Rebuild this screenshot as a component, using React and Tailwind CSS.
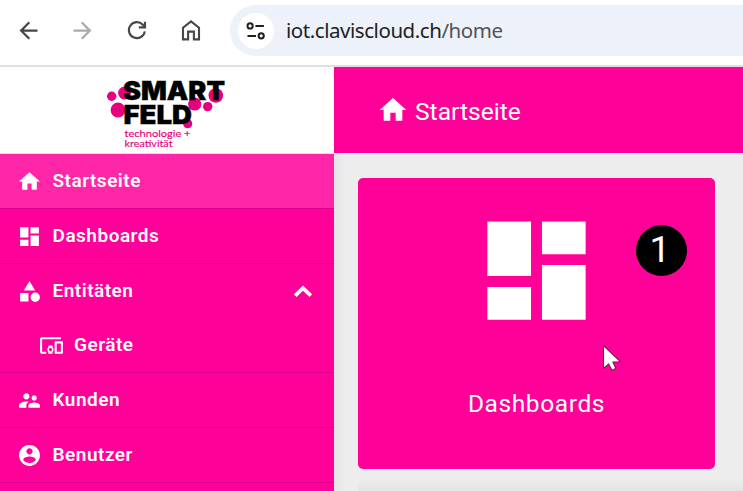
const ICONS = {
  home: 'M10 20v-6h4v6h5v-8h3L12 3 2 12h3v8z',
  dashboard: 'M3 13h8V3H3v10zm0 8h8v-6H3v6zm10 0h8V11h-8v10zm0-18v6h8V3h-8z',
  category: 'M12 2l-5.5 9h11zM17.5 13a4.5 4.5 0 1 0 0 9 4.5 4.5 0 0 0 0-9zM3 13.5h8v8H3z',
  devices: 'M3 6h18V4H3c-1.1 0-2 .9-2 2v12c0 1.1.9 2 2 2h4v-2H3V6zm10 6H9v1.78c-.61.55-1 1.33-1 2.22s.39 1.67 1 2.22V20h4v-1.78c.61-.55 1-1.34 1-2.22s-.39-1.67-1-2.22V12zm-2 5.5c-.83 0-1.5-.67-1.5-1.5s.67-1.5 1.5-1.5 1.5.67 1.5 1.5-.67 1.5-1.5 1.5zM22 8h-6c-.5 0-1 .5-1 1v10c0 .5.5 1 1 1h6c.5 0 1-.5 1-1V9c0-.5-.5-1-1-1zm-1 10h-4v-8h4v8z',
  people: 'M16.5 12c1.38 0 2.49-1.12 2.49-2.5S17.88 7 16.5 7C15.12 7 14 8.12 14 9.5s1.12 2.5 2.5 2.5zM9 11c1.66 0 2.99-1.34 2.99-3S10.66 5 9 5C7.34 5 6 6.34 6 8s1.34 3 3 3zm7.5 3c-1.83 0-5.5.92-5.5 2.75V19h11v-2.25c0-1.83-3.67-2.75-5.5-2.75zM9 13c-2.33 0-7 1.17-7 3.5V19h7v-2.25c0-.85.33-2.34 2.37-3.47C10.5 13.1 9.66 13 9 13z',
  account: 'M12 2C6.48 2 2 6.48 2 12s4.48 10 10 10 10-4.48 10-10S17.52 2 12 2zm0 3c1.66 0 3 1.34 3 3s-1.34 3-3 3-3-1.34-3-3 1.34-3 3-3zm0 14.2c-2.5 0-4.71-1.28-6-3.22.03-1.99 4-3.08 6-3.08 1.99 0 5.97 1.09 6 3.08-1.29 1.94-3.5 3.22-6 3.22z',
  back: 'M20 11H7.83l5.59-5.59L12 4l-8 8 8 8 1.41-1.41L7.83 13H20v-2z',
  forward: 'M12 4l-1.41 1.41L16.17 11H4v2h12.17l-5.58 5.59L12 20l8-8z',
}

function Icon({ name, className }) {
  return (
    <svg viewBox="0 0 24 24" fill="currentColor" className={`shrink-0 ${className}`}>
      <path d={ICONS[name]} />
    </svg>
  )
}

function BrowserBar() {
  return (
    <div className="flex h-[67px] shrink-0 border-b-2 border-[#e0e0e0] bg-white pt-[5px]">
      <div className="flex h-[51px] w-[230px] shrink-0 items-center gap-[27px] pl-[15px] text-[#474747]">
        <Icon name="back" className="size-[27px]" />
        <Icon name="forward" className="size-[27px] text-[#ababab]" />
        <svg viewBox="0 0 27 27" fill="none" stroke="currentColor" strokeWidth="2.1" className="size-[27px] shrink-0">
          <path d="M21.8 14.3A8 8 0 1 1 19.6 7.5L21.6 9.5" />
          <path d="M22 4.8v5.6h-6.2" />
        </svg>
        <svg viewBox="0 0 27 27" fill="none" stroke="currentColor" strokeWidth="2.1" className="size-[27px] shrink-0">
          <path d="M6 22.4V10.8l8-6.4 8 6.4v11.6h-5.1v-7.8h-5.8v7.8z" />
        </svg>
      </div>
      <div className="flex h-[51px] flex-1 items-center rounded-l-full bg-[#ecf1fa] pl-[8px]">
        <div className="flex size-9 items-center justify-center rounded-full bg-white">
          <svg viewBox="0 0 20 18" fill="none" stroke="#1f1f1f" strokeWidth="2" className="h-[18px] w-5">
            <circle cx="4.1" cy="3.9" r="2.6" />
            <path d="M9.4 4h8.5M1.5 14h8.5" />
            <circle cx="15.2" cy="13.8" r="2.6" />
          </svg>
        </div>
        <svg className="ml-[12px] h-8 w-[224px]" role="img">
          <text x="0" y="23" fontSize="20.5" textLength="217" className="fill-[#202124] font-['Noto_Sans','Open_Sans',sans-serif]">
            iot.claviscloud.ch<tspan className="fill-[#505359]">/home</tspan>
          </text>
        </svg>
      </div>
    </div>
  )
}

function Logo() {
  return (
    <div className="flex h-[87px] shrink-0 justify-start border-b border-[#efd5e4] bg-white pl-[95px]">
      <svg viewBox="0 0 140 86" className="h-[86px] w-[140px]">
        <g fill="#e6007e">
          <circle cx="16.7" cy="29.2" r="4.7" />
          <circle cx="29.5" cy="26" r="6.4" />
          <circle cx="23" cy="43" r="7.4" />
          <circle cx="120.8" cy="28.5" r="7.3" />
          <circle cx="99.7" cy="37" r="6.6" />
          <circle cx="112.7" cy="39.6" r="4.7" />
          <circle cx="92.7" cy="56.7" r="4.6" />
        </g>
        <g fill="#000" stroke="#000" strokeWidth=".4" className="font-['Inter',sans-serif] font-black">
          <text x="28" y="32.5" fontSize="25.5" textLength="102" lengthAdjust="spacingAndGlyphs">SMART</text>
          <text x="28.5" y="57" fontSize="25.5" textLength="68.5" lengthAdjust="spacingAndGlyphs">FELD</text>
        </g>
        <g fill="#e6007e" stroke="#e6007e" strokeWidth=".15" fontSize="10" className="font-['Lato',sans-serif]">
          <text x="29.5" y="70" textLength="66" lengthAdjust="spacingAndGlyphs">technologie +</text>
          <text x="29.5" y="80" textLength="48" lengthAdjust="spacingAndGlyphs">kreativität</text>
        </g>
      </svg>
    </div>
  )
}

function NavItem({ icon, label, active, child, open }) {
  return (
    <div
      className={`flex shrink-0 items-center text-[19px] leading-6 font-semibold tracking-[0.5px] text-white ${
        child ? 'pl-[39px]' : 'pl-[17px]'
      } ${open ? 'h-[54px]' : 'h-[55px] border-b border-[#dc008e]'} ${active ? 'bg-[#ff26a8]' : ''}`}
    >
      <Icon name={icon} className="size-[25px]" />
      <span className={child ? 'ml-[10px]' : 'ml-[10.5px]'}>{label}</span>
      {open && (
        <svg viewBox="0 0 20 14" fill="none" stroke="#fff" strokeWidth="3.8" className="ml-auto mr-[21px] h-[14px] w-5">
          <path d="M2.2 11.6L10 4.2l7.8 7.4" />
        </svg>
      )}
    </div>
  )
}

function Sidebar() {
  return (
    <aside className="z-10 flex w-[334px] shrink-0 flex-col overflow-hidden bg-[#ff0099]">
      <Logo />
      <NavItem icon="home" label="Startseite" active />
      <NavItem icon="dashboard" label="Dashboards" />
      <NavItem icon="category" label="Entitäten" open />
      <NavItem icon="devices" label="Geräte" child />
      <NavItem icon="people" label="Kunden" />
      <NavItem icon="account" label="Benutzer" />
    </aside>
  )
}

function DashboardCard() {
  return (
    <div className="relative flex h-[291px] w-[357px] flex-col items-center rounded-[5px] bg-[#ff0099] pt-[27px] text-white">
      <Icon name="dashboard" className="size-[131px]" />
      <span className="mt-[52px] text-[24.5px] leading-8 tracking-[0.6px]">Dashboards</span>
      <div className="absolute top-[47px] left-[277.5px] flex size-[51px] items-center justify-center rounded-full bg-black pr-[2px] pb-[2px] text-[37px] leading-none">
        1
      </div>
      <svg viewBox="0 0 20 28" className="absolute top-[166px] left-[244px] h-7 w-5">
        <path d="M1.5 1.5v23l5.2-4.6 3.2 6.3 4-1.8-3-6.3 7.6-.3z" fill="#fff" stroke="#7a1a5a" strokeWidth="1.1" strokeLinejoin="round" />
      </svg>
    </div>
  )
}

export default function App() {
  return (
    <div className="flex h-[491px] w-[743px] flex-col overflow-hidden bg-white font-['Roboto',sans-serif]">
      <BrowserBar />
      <div className="flex min-h-0 flex-1">
        <Sidebar />
        <main className="flex min-w-0 flex-1 flex-col bg-[#ededed]">
          <header className="flex h-[86px] shrink-0 items-center bg-[#ff0099] pl-[43px] text-white">
            <Icon name="home" className="size-8" />
            <h1 className="ml-[6px] pt-[3px] text-[24.6px] leading-8">Startseite</h1>
          </header>
          <div className="flex flex-1 flex-col justify-between bg-gradient-to-r from-[#e5e5e5] to-[#ededed] to-[3%] pt-[25px] pl-[24px]">
            <DashboardCard />
            <div className="h-3 bg-gradient-to-b from-transparent to-[#e4e4e4]" />
          </div>
        </main>
      </div>
    </div>
  )
}
